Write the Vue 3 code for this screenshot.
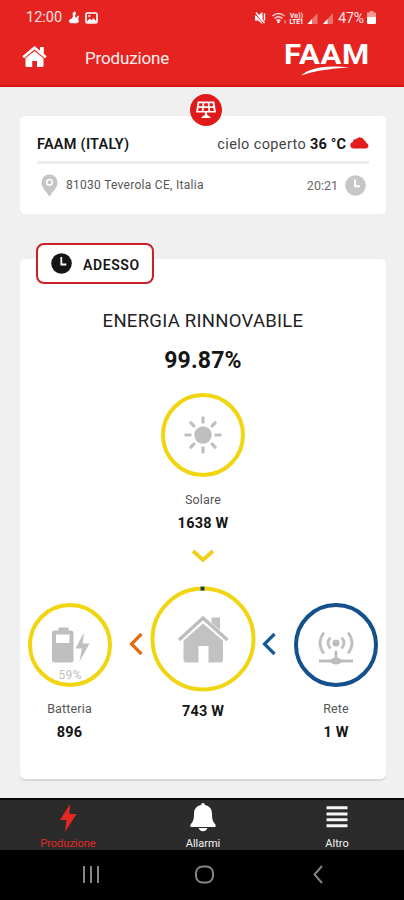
<script setup>
const rays = [0, 45, 90, 135, 180, 225, 270, 315]
</script>

<template>
  <div class="screen">
    <header class="top">
      <div class="status">
        <span class="clock">12:00</span>
        <svg class="st-person" width="12" height="13" viewBox="0 0 12 13">
          <path d="M6.200 0.600c1.500 0 2 1.200 1.500 2.400L7 5l1 2 2-2.500 1 .5-.8 3 .8 2.800-2 1.400H2.600L.6 10.400l1-2L4 7.500 5 5 4.500 2.500z" fill="#fff" />
        </svg>
        <svg class="st-image" width="13" height="12" viewBox="0 0 13 12">
          <rect x="1" y="1" width="11" height="10" rx="1.500" fill="none" stroke="#fff" stroke-width="1.700" />
          <path d="M2 9.500l2.700-3 1.700 1.700 2-2.200 3 3.500v1H2z" fill="#fff" />
          <circle cx="4.300" cy="4" r="1.100" fill="#fff" />
        </svg>
        <span class="grow"></span>
        <svg class="st-right" width="80" height="14" viewBox="0 0 80 14">
          <path d="M1 4.500h3l4.500-3.500v12L4 9.500H1z" fill="#fff" />
          <path d="M1 2.500l8 9.500" stroke="#e52421" stroke-width="1" />
          <path d="M2 1.500l8.500 10.500M10.500 2.500v7" stroke="#fff" stroke-width="1.400" />
          <g fill="none" stroke="#fbd3d2" stroke-width="1.500">
            <path d="M18.500 5q6-5 12 0M20.500 7.500q4-3.500 8 0M22.500 9.800q2-1.800 4 0" />
          </g>
          <circle cx="24.500" cy="11" r="1.200" fill="#fff" />
          <path d="M31 9v3.500" stroke="#f6aaa8" />
          <text x="36" y="6.500" class="tiny" textLength="13">Vo))</text>
          <text x="35.500" y="13" class="tiny" textLength="14">LTE1</text>
          <path d="M63.500 2v11h-10z" fill="#ee716e" />
          <path d="M58 8v5h-4.500z" fill="#fff" />
          <path d="M79 2v11H69z" fill="#ee716e" />
          <path d="M73.500 8v5H69z" fill="#fff" />
        </svg>
        <span class="pct">47%</span>
        <svg width="9" height="13" viewBox="0 0 9 13">
          <path d="M2.500 0h4v1.500H9V6H0V1.500h2.500z" fill="#f39a98" />
          <path d="M0 6h9v5.500a1.500 1.500 0 0 1-1.500 1.500h-6A1.500 1.500 0 0 1 0 11.500z" fill="#fff" />
        </svg>
      </div>
      <div class="bar">
        <svg width="26" height="22" viewBox="0 0 26 22">
          <path d="M1.200 11.300L12.500 1.800l11.300 9.500" fill="none" stroke="#fff" stroke-width="2.600" />
          <path d="M18 1h3.800v8L18 5z" fill="#fff" />
          <path d="M12.500 4.900L21.500 12.300V20a1 1 0 0 1-1 1H15v-6h-4.800v6H4.500a1 1 0 0 1-1-1v-7.700z" fill="#fff" />
        </svg>
        <h1>Produzione</h1>
        <div class="logo">
          <span class="word">FAAM</span>
          <svg width="50" height="10" viewBox="0 0 50 10">
            <path d="M1 9.500C10 1.200 27-1 49 1.200 29 2.800 14 5 1 9.500z" fill="#fff" />
          </svg>
        </div>
      </div>
    </header>

    <main>
      <section class="card plant">
        <div class="badge">
          <svg width="22" height="20" viewBox="0 0 22 20">
            <path d="M2.700 1.500h16.600L21 12.500H1z" fill="#fff" />
            <path d="M4.300 3.200h3.300l-.3 3H3.900zM9.200 3.200h3.600l.2 3H9zM14.400 3.200h3.300l.4 3h-3.400zM3.600 7.900h3.500l-.3 3H3.100zM8.800 7.900h4.400l.2 3H8.600zM14.900 7.900h3.500l.5 3h-3.700z" fill="#e01a1a" />
            <path d="M10 12h2v2.500l3.500 2.700v.8h-9v-.8l3.500-2.700z" fill="#fff" />
          </svg>
        </div>
        <div class="row first">
          <strong class="name">FAAM (ITALY)</strong>
          <span class="weather">cielo coperto <b>36 °C</b></span>
          <svg class="cloud" width="19" height="14" viewBox="0 0 19 14">
            <path d="M3.500 13.500a3.300 3.300 0 0 1-.7-6.500 3.400 3.400 0 0 1 3.400-3A4.600 4.600 0 0 1 14 5.200 3.400 3.400 0 0 1 16.300 8a2.800 2.800 0 0 1-.1 5.500z" fill="#e31c1c" />
          </svg>
        </div>
        <div class="row second">
          <svg width="17" height="23" viewBox="0 0 17 23">
            <path d="M8.500.5a8 8 0 0 1 8 8c0 5-4 8-8 14-4-6-8-9-8-14a8 8 0 0 1 8-8z" fill="#c5c5c5" />
            <circle cx="8.500" cy="8.300" r="2.800" fill="none" stroke="#fff" stroke-width="1.600" />
          </svg>
          <span class="address">81030 Teverola CE, Italia</span>
          <span class="time">20:21</span>
          <svg width="21" height="21" viewBox="0 0 21 21">
            <circle cx="10.500" cy="10.500" r="10.300" fill="#c7c7c7" />
            <path d="M10 4.500v6.700h5" fill="none" stroke="#fff" stroke-width="2" />
          </svg>
        </div>
      </section>

      <section class="card energy">
        <div class="now">
          <svg width="21" height="21" viewBox="0 0 21 21">
            <circle cx="10.500" cy="10.500" r="10.300" fill="#151515" />
            <path d="M10.300 4v7.500h5" fill="none" stroke="#fff" stroke-width="1.800" />
          </svg>
          <span>ADESSO</span>
        </div>
        <h2>ENERGIA RINNOVABILE</h2>
        <p class="percent">99.87%</p>

        <svg class="sun" width="84" height="84" viewBox="0 0 84 84">
          <circle cx="42" cy="42" r="40" fill="#fff" stroke="#f1d511" stroke-width="4" />
          <circle cx="42" cy="42" r="8.700" fill="#bfbfbf" />
          <rect v-for="r in rays" :key="r" x="40.400" y="23.500" width="3.200" height="7" rx="0.800" fill="#bfbfbf" :transform="`rotate(${r} 42 42)`" />
        </svg>
        <p class="label solar-label">Solare</p>
        <p class="value solar-value">1638 W</p>
        <svg class="down" width="24" height="14" viewBox="0 0 24 14">
          <path d="M2 2l10 9 10-9" fill="none" stroke="#f0cf18" stroke-width="3.800" />
        </svg>

        <div class="flow">
          <div class="node side">
            <svg width="84" height="84" viewBox="0 0 84 84">
              <circle cx="42" cy="42" r="40" fill="#fff" stroke="#f1d511" stroke-width="4" />
              <path d="M30.500 24.500h10v3h2.500a2.500 2.500 0 0 1 2.500 2.500v27a2.500 2.500 0 0 1-2.500 2.500H26.500A2.500 2.500 0 0 1 24 57V30a2.500 2.500 0 0 1 2.500-2.500h4zM28 31.500v8.500h13.500v-8.500z" fill="#bfbfbf" fill-rule="evenodd" />
              <path d="M56 29.500L47.500 45.500h6.300l-2.300 13L61.500 40.500h-7z" fill="#bfbfbf" />
              <text x="42" y="75.500" class="charge" text-anchor="middle" textLength="23">59%</text>
            </svg>
            <p class="label">Batteria</p>
            <p class="value">896</p>
          </div>
          <svg class="arrow left-arrow" width="14" height="24" viewBox="0 0 14 24">
            <path d="M12.500 2L2.500 12l10 10" fill="none" stroke="#e06b12" stroke-width="3.200" />
          </svg>
          <div class="node home">
            <svg width="106" height="106" viewBox="0 0 106 106">
              <circle cx="53" cy="53" r="50.500" fill="#fff" stroke="#f1d511" stroke-width="4" />
              <path d="M50.500 2.600h4" stroke="#163f57" stroke-width="4" />
              <path d="M61.500 31.500h8.500v17l-8.500-7z" fill="#c2c2c2" />
              <path d="M53 36L73 53.500v20a3 3 0 0 1-3 3H58.500V60h-10v16.500H36.500a3 3 0 0 1-3-3v-20z" fill="#c2c2c2" />
              <path d="M29 54.500L53 33.500l24.500 21" fill="none" stroke="#fff" stroke-width="6" />
              <path d="M29 54L53 32l24.500 22" fill="none" stroke="#bdbdbd" stroke-width="3.300" />
            </svg>
            <p class="value">743 W</p>
          </div>
          <svg class="arrow right-arrow" width="14" height="24" viewBox="0 0 14 24">
            <path d="M12.500 2L2.500 12l10 10" fill="none" stroke="#155b96" stroke-width="3.200" />
          </svg>
          <div class="node side">
            <svg width="84" height="84" viewBox="0 0 84 84">
              <circle cx="42" cy="42" r="40" fill="#fff" stroke="#14508b" stroke-width="4" />
              <circle cx="42" cy="40" r="3.600" fill="#bdbdbd" />
              <g fill="none" stroke="#c0c0c0" stroke-width="2.800">
                <path d="M36.500 34.500q-5 5.500 0 11M47.500 34.500q5 5.500 0 11M30 29.500q-8 10.500 0 21M54 29.500q8 10.500 0 21" />
              </g>
              <path d="M42 48v10M25 58h34" stroke="#bdbdbd" stroke-width="2.800" />
              <ellipse cx="42" cy="58" rx="5.500" ry="3.600" fill="#bdbdbd" />
            </svg>
            <p class="label">Rete</p>
            <p class="value">1 W</p>
          </div>
        </div>
      </section>
    </main>

    <nav class="tabs">
      <div class="tab active">
        <svg width="18" height="30" viewBox="0 0 18 30">
          <path d="M11 1L1 17h6.500L6 29 17.500 11H10.500z" fill="#e52722" />
        </svg>
        <span>Produzione</span>
      </div>
      <div class="tab">
        <svg width="26" height="30" viewBox="0 0 26 30">
          <path d="M13 0a2 2 0 0 1 2 2c4.500 1 7 4 7 8.500 0 7 1 8 3.500 11v2.500H.5v-2.500C3 18.500 4 17.500 4 10.500 4 6 6.500 3 11 2a2 2 0 0 1 2-2zM8.500 25h9c-.8 2-2 3.200-4.500 3.200S9.300 27 8.500 25z" fill="#fff" />
        </svg>
        <span>Allarmi</span>
      </div>
      <div class="tab">
        <svg width="22" height="30" viewBox="0 0 22 30">
          <path d="M.5 4.700h21M.5 11h21M.5 16.800h21M.5 22.700h21" stroke="#f5f5f5" stroke-width="2.900" />
        </svg>
        <span>Altro</span>
      </div>
    </nav>

    <div class="system">
      <svg width="404" height="50" viewBox="0 0 404 50" fill="none" stroke="#858585" stroke-width="2">
        <path d="M84 16v17M91 16v17M98 16v17" />
        <rect x="196" y="16.500" width="17" height="16" rx="6.500" />
        <path d="M322 16L314.500 24.500l7.500 8.500" />
      </svg>
    </div>
  </div>
</template>

<style>
body {
  margin: 0;
  background: #f0f0f0;
}
</style>

<style scoped>
.screen {
  width: 404px;
  height: 900px;
  display: flex;
  flex-direction: column;
  overflow: hidden;
  background: #f0f0f0;
  color: #151515;
  font-family: Roboto, "Liberation Sans", sans-serif;
}
svg {
  display: block;
  flex: none;
}
p, h1, h2 {
  margin: 0;
}
.top {
  box-sizing: border-box;
  height: 87px;
  background: #e52421;
  border-bottom: 2px solid #d8140f;
  color: #fff;
}
.status {
  display: flex;
  align-items: center;
  height: 35px;
  padding: 0 28px 0 26px;
}
.clock {
  font-size: 14.5px;
  width: 42px;
  color: #fde5e4;
}
.st-image {
  margin-left: 5px;
}
.grow {
  flex: 1;
}
.pct {
  margin: 0 3px 0 4px;
  font-size: 14px;
  letter-spacing: -0.1px;
  color: #fde5e4;
}
.tiny {
  font-size: 6.5px;
  font-weight: 700;
  fill: #fff;
}
.bar {
  display: flex;
  align-items: flex-start;
  padding: 11px 34px 0 22px;
}
h1 {
  margin: 1px 0 0 37px;
  font-size: 17px;
  line-height: 22px;
  font-weight: 400;
  letter-spacing: -0.15px;
  color: #fff0ef;
}
.logo {
  width: 86px;
  margin-left: auto;
  margin-top: -2px;
}
.word {
  display: block;
  height: 22px;
  font-size: 27px;
  line-height: 22px;
  font-weight: 700;
  letter-spacing: 0.6px;
  transform: scaleX(1.15);
  transform-origin: left;
  white-space: nowrap;
}
.logo svg {
  margin: 0 0 0 16px;
}
main {
  height: 711px;
  display: flex;
  flex-direction: column;
}
.card {
  position: relative;
  box-sizing: border-box;
  width: 366px;
  margin-left: 20px;
  background: #fff;
  border-radius: 5px;
}
.plant {
  height: 98px;
  margin-top: 29px;
  padding: 12px 17px 0;
}
.badge {
  position: absolute;
  left: 170px;
  top: -22px;
  width: 32px;
  height: 32px;
  border-radius: 50%;
  background: #e01a1a;
  display: flex;
  align-items: center;
  justify-content: center;
}
.row {
  display: flex;
  align-items: center;
}
.first {
  height: 33px;
  border-bottom: 3px solid #ececec;
}
.name {
  font-size: 14.5px;
  font-weight: 600;
  letter-spacing: 0.25px;
}
.weather {
  margin: 0 4px 0 auto;
  font-size: 14.5px;
  letter-spacing: 0.37px;
  color: #444;
}
.weather b {
  color: #151515;
  font-weight: 700;
  letter-spacing: 0.1px;
}
.cloud {
  margin-top: -5px;
}
.second {
  height: 42px;
  padding: 0 3px 0 4px;
}
.address {
  margin-left: 8px;
  font-size: 12px;
  letter-spacing: 0.28px;
  color: #555;
}
.time {
  margin: 0 7px 0 auto;
  font-size: 12.5px;
  color: #666;
}
.energy {
  height: 520px;
  margin-top: 45px;
  padding-top: 50px;
  display: flex;
  flex-direction: column;
  align-items: center;
  box-shadow: 0 2px 1px #d9d9d9;
}
.now {
  position: absolute;
  left: 16px;
  top: -16px;
  box-sizing: border-box;
  width: 118px;
  height: 41px;
  display: flex;
  align-items: center;
  gap: 11px;
  padding-left: 13px;
  border: 2px solid #cb2027;
  border-radius: 8px;
  background: #fff;
  font-size: 14px;
  font-weight: 600;
  letter-spacing: 0.6px;
}
.now span {
  padding-top: 2px;
}
h2 {
  font-size: 18.5px;
  line-height: 24px;
  font-weight: 400;
  letter-spacing: 0.27px;
  white-space: nowrap;
  color: #222;
}
.percent {
  margin-top: 13px;
  font-size: 23px;
  line-height: 30px;
  font-weight: 700;
  letter-spacing: 0.2px;
}
.sun {
  margin-top: 17px;
}
.label {
  font-size: 12.5px;
  line-height: 18px;
  letter-spacing: 0.15px;
  color: #555;
}
.value {
  font-size: 14.5px;
  line-height: 20px;
  font-weight: 700;
  letter-spacing: 0.2px;
}
.solar-label {
  margin-top: 14px;
}
.solar-value {
  margin-top: 5px;
}
.down {
  margin-top: 15px;
}
.flow {
  align-self: stretch;
  display: grid;
  grid-template-columns: 84px 39px 105px 38.5px 84px;
  margin-top: 23px;
  padding-left: 7.5px;
}
.node {
  display: flex;
  flex-direction: column;
  align-items: center;
}
.side {
  padding-top: 17px;
}
.side .label {
  margin-top: 13px;
}
.side .value {
  margin-top: 5px;
}
.home .value {
  margin-top: 10px;
}
.arrow {
  margin-top: 46px;
}
.left-arrow {
  margin-left: 17px;
}
.right-arrow {
  margin-left: 6px;
}
.charge {
  font-size: 12px;
  fill: #c0c0c0;
}
.tabs {
  box-sizing: border-box;
  height: 52px;
  display: grid;
  grid-template-columns: 136px 134px 134px;
  border-top: 2px solid #090909;
  background: #2b2b2b;
  color: #f4f4f4;
  font-size: 11px;
  line-height: 14px;
}
.tab {
  display: flex;
  flex-direction: column;
  align-items: center;
  padding-top: 3px;
  gap: 4px;
}
.active {
  color: #e52722;
}
.system {
  height: 50px;
  background: #000;
}
</style>
